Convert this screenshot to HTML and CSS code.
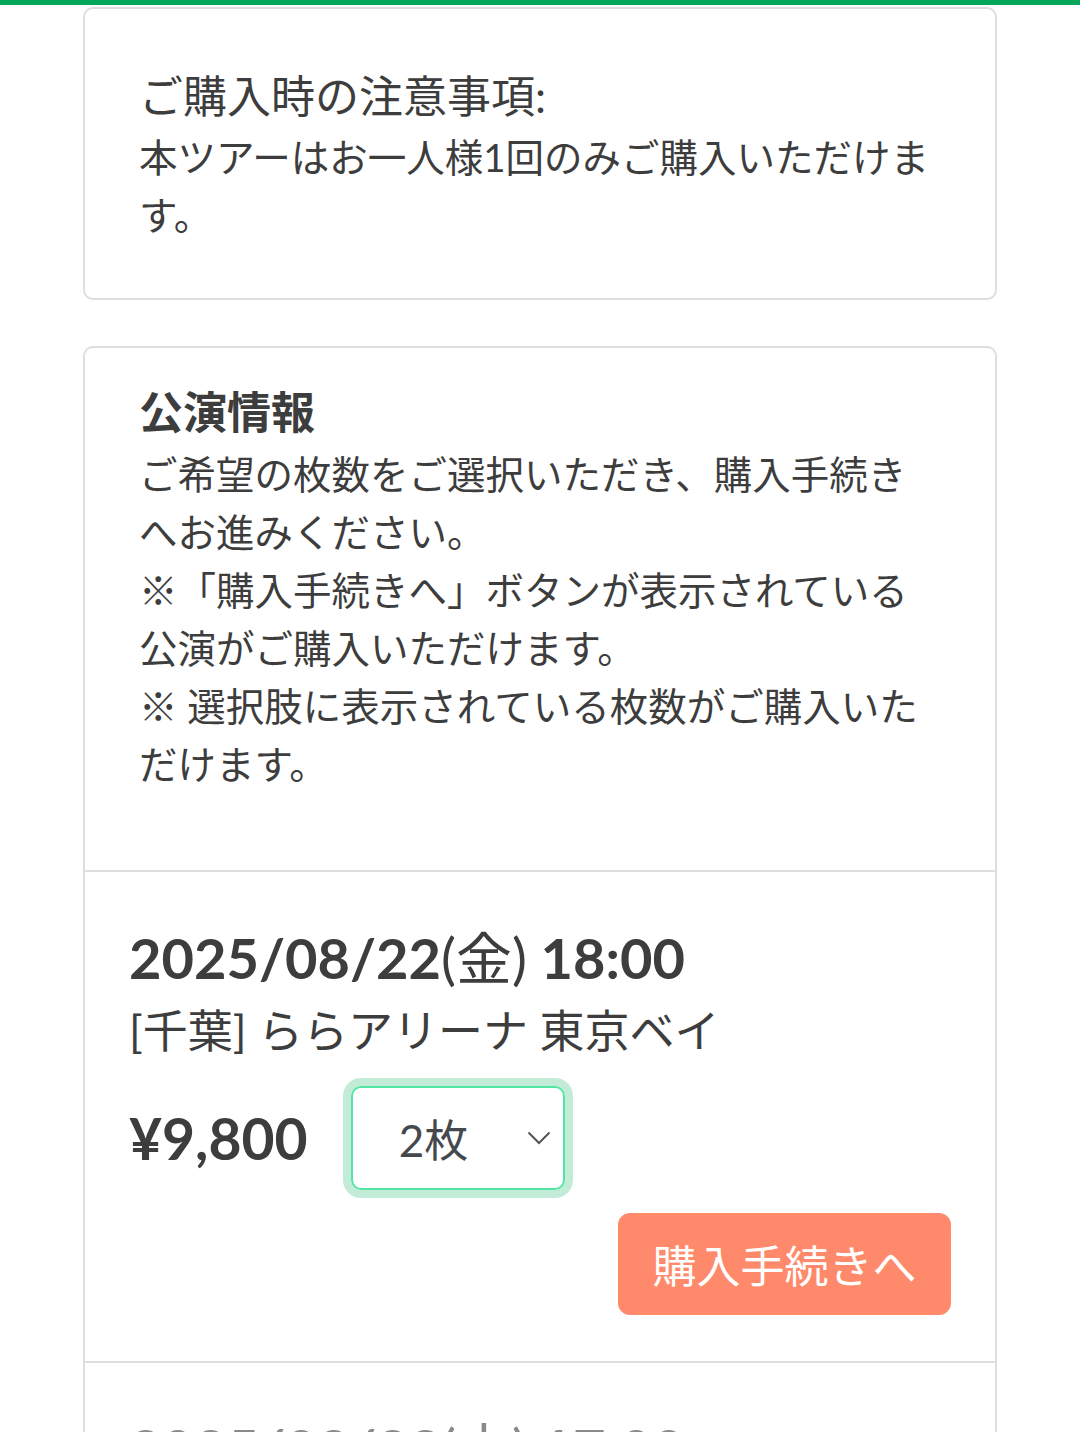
FILE: index.html
```html
<!DOCTYPE html>
<html lang="ja">
<head>
<meta charset="utf-8">
<title>公演情報</title>
<link rel="stylesheet" href="styles.css">
</head>
<body>
<div class="topbar"></div>
<main class="page">
  <section class="card notice">
    <h2 class="notice-title">ご購入時の注意事項:</h2>
    <p class="text">本ツアーはお一人様1回のみご購入いただけます。</p>
  </section>

  <section class="card shows">
    <div class="info">
      <h2 class="info-title">公演情報</h2>
      <p class="text">ご希望の枚数をご選択いただき、購入手続きへお進みください。<br>※「購入手続きへ」ボタンが表示されている公演がご購入いただけます。<br>※ 選択肢に表示されている枚数がご購入いただけます。</p>
    </div>

    <div class="event">
      <div class="date">2025/08/22<span class="dow">(金)</span> 18:00</div>
      <div class="venue">[千葉] ららアリーナ 東京ベイ</div>
      <div class="price-row">
        <div class="price">¥9,800</div>
        <div class="select">
          <span class="select-value">2枚</span>
          <svg class="chevron" width="24" height="14" viewBox="0 0 24 14"><path d="M1.5 1.5 L12 12 L22.5 1.5" fill="none" stroke="#555" stroke-width="2"/></svg>
        </div>
      </div>
      <div class="action-row">
        <button class="buy">購入手続きへ</button>
      </div>
    </div>

    <div class="event">
      <div class="date muted">2025/08/23<span class="dow">(土)</span> 17:00</div>
      <div class="venue">[千葉] ららアリーナ 東京ベイ</div>
    </div>
  </section>
</main>
</body>
</html>
```

FILE: styles.css
```css
html, body {
  margin: 0;
  padding: 0;
  background: #ffffff;
}
body {
  font-family: Lato, "Noto Sans CJK JP", sans-serif;
  color: #3d3d3d;
  height: 1432px;
  overflow: hidden;
}
.topbar {
  height: 5px;
  background: #05a75b;
}
.page {
  width: 914px;
  margin: 2px 0 0 83px;
}
.card {
  box-sizing: border-box;
  border: 2px solid #dedede;
  border-radius: 10px;
  background: #fff;
}
.notice {
  padding: 56px 56px 54px 54px;
}
.notice-title {
  margin: 0;
  font-size: 44px;
  line-height: 63px;
  font-weight: 400;
}
.text {
  margin: 0;
  font-size: 38.5px;
  line-height: 58px;
}
.shows {
  margin-top: 46px;
}
.info {
  padding: 31px 56px 77px 54px;
}
.info-title {
  margin: 0;
  font-size: 44px;
  line-height: 66px;
  font-weight: 700;
}
.event {
  border-top: 2px solid #dedede;
  padding: 46px 44px 46px 44px;
}
.date {
  font-size: 56px;
  line-height: 80px;
  font-weight: 700;
}
.dow {
  font-weight: 400;
}
.date.muted {
  color: #8a8a8a;
}
.venue {
  font-size: 45px;
  line-height: 66px;
}
.price-row {
  display: flex;
  align-items: center;
  gap: 43px;
  margin-top: 22px;
}
.price {
  font-size: 57px;
  font-weight: 700;
  line-height: 1;
}
.select {
  box-sizing: border-box;
  width: 214px;
  height: 104px;
  border: 2px solid #52e6a4;
  border-radius: 10px;
  box-shadow: 0 0 0 8px #c2ecd8;
  display: flex;
  align-items: center;
  justify-content: space-between;
  padding: 0 12px 0 46px;
  color: #45494e;
  font-size: 44px;
}
.chevron {
  display: block;
}
.action-row {
  display: flex;
  justify-content: flex-end;
  margin-top: 23px;
}
.buy {
  width: 333px;
  height: 102px;
  border: none;
  border-radius: 12px;
  background: #fe8a6b;
  color: #fff;
  font-family: Lato, "Noto Sans CJK JP", sans-serif;
  font-size: 44px;
  padding: 0;
}
```
